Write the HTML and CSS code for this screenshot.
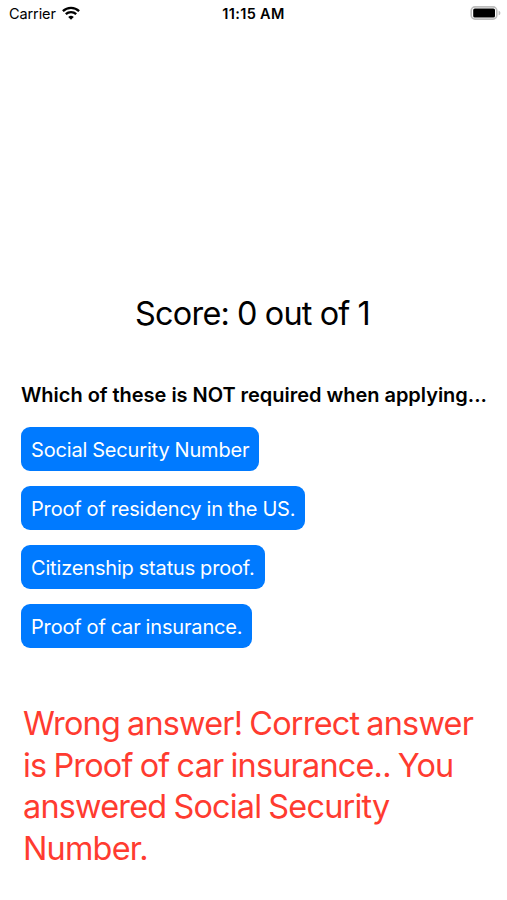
FILE: index.html
```html
<!DOCTYPE html>
<html lang="en">
<head>
    <meta charset="UTF-8">
    <meta name="viewport" content="width=device-width, initial-scale=1.0">
    <title>Quiz</title>
    <link rel="stylesheet" href="styles.css">
</head>
<body>
    <div class="status-bar">
        <div class="carrier">
            <span>Carrier</span>
            <svg class="wifi" viewBox="0 0 18 14">
                <path d="M0.9 5.1a11.6 11.6 0 0 1 16.2 0M3.8 8.2a7.5 7.5 0 0 1 10.4 0" fill="none" stroke="#000" stroke-width="2.3"/>
                <path d="M9 13.8L6.2 11a4 4 0 0 1 5.6 0z"/>
            </svg>
        </div>
        <div class="time">11:15 AM</div>
        <svg class="battery" viewBox="0 0 32 14">
            <rect x="1.2" y="0.9" width="25.6" height="12.2" rx="3.8" fill="none" stroke="#bdbdbd" stroke-width="1.6"/>
            <rect x="3.2" y="2.5" width="21.8" height="9" rx="1.6"/>
            <path d="M28.6 4.7c2.4.7 2.4 3.9 0 4.6z" fill="#bdbdbd"/>
        </svg>
    </div>
    <div class="quiz">
        <p class="score">Score: 0 out of 1</p>
        <h2 class="question">Which of these is NOT required when applying...</h2>
        <div class="answers">
            <button class="answer-btn">Social Security Number</button>
            <button class="answer-btn">Proof of residency in the US.</button>
            <button class="answer-btn">Citizenship status proof.</button>
            <button class="answer-btn">Proof of car insurance.</button>
        </div>
        <p class="result">Wrong answer! Correct answer<br>is Proof of car insurance.. You<br>answered Social Security<br>Number.</p>
    </div>
</body>
</html>
```
FILE: styles.css
```css
body {
    margin: 0;
    height: 900px;
    background: white;
    color: black;
    font-family: Inter, sans-serif;
    overflow: hidden;
}
.status-bar {
    display: grid;
    grid-template-columns: 1fr auto 1fr;
    align-items: center;
    height: 27px;
    padding: 0 5px 0 9px;
    font-size: 14.5px;
}
.carrier {
    display: flex;
    align-items: center;
    gap: 6px;
    letter-spacing: -0.1px;
}
.wifi {
    width: 18px;
    height: 14px;
    margin-top: -2px;
}
.time {
    font-weight: 600;
    letter-spacing: 0.35px;
    margin-right: 4px;
}
.battery {
    width: 32px;
    height: 14px;
    margin-top: -1px;
    justify-self: end;
}
.quiz {
    padding: 266px 21px 0;
}
.score {
    margin: 0 2px 0 0;
    font-size: 32.4px;
    line-height: 42px;
    letter-spacing: -0.75px;
    word-spacing: -0.4px;
    text-align: center;
    white-space: nowrap;
}
.question {
    margin: 47px 0 0;
    font-size: 20px;
    font-weight: 600;
    line-height: 26px;
    letter-spacing: -0.03px;
    white-space: nowrap;
}
.answers {
    display: flex;
    flex-direction: column;
    align-items: flex-start;
    gap: 15px;
    margin-top: 19px;
}
.answer-btn {
    height: 44px;
    padding: 2px 10px 0;
    border: none;
    border-radius: 9px;
    background-color: #007aff;
    color: white;
    font-family: inherit;
    font-size: 20px;
    letter-spacing: -0.17px;
    word-spacing: -0.4px;
    white-space: nowrap;
}
.result {
    margin: 55px 0 0 2px;
    color: #ff3b30;
    font-size: 32.4px;
    line-height: 41.7px;
    letter-spacing: -0.78px;
    word-spacing: -1.3px;
    white-space: nowrap;
}
```
